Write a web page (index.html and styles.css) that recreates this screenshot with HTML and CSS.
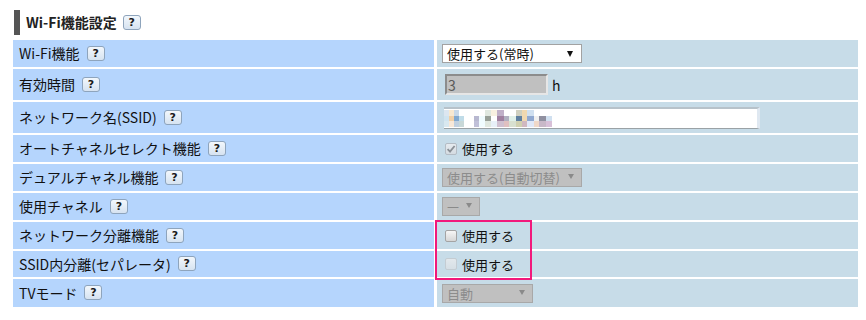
FILE: index.html
```html
<!DOCTYPE html>
<html lang="ja">
<head>
<meta charset="utf-8">
<title>Wi-Fi機能設定</title>
<link rel="stylesheet" href="styles.css">
</head>
<body>
<div class="page">
  <div class="heading">
    <span class="bar"></span>
    <span class="title">Wi-Fi機能設定</span>
    <span class="help">?</span>
  </div>
  <div class="table">
    <div class="label r27">Wi-Fi機能<span class="help">?</span></div>
    <div class="value r27"><div class="sel sel-main">使用する(常時)<i class="arrow"></i></div></div>

    <div class="label r31">有効時間<span class="help">?</span></div>
    <div class="value r31"><div class="num">3</div><span class="unit">h</span></div>

    <div class="label r31">ネットワーク名(SSID)<span class="help">?</span></div>
    <div class="value r31">
      <div class="ssid">
        <div class="mosaic">
          <span class="m m1"></span><span class="m m2"></span><span class="m m3"></span><span class="m m4"></span><span class="m m5"></span><span class="m m6"></span><span class="m m7"></span><span class="m m8"></span><span class="m m9"></span><span class="m m10"></span><span class="m m11"></span><span class="m m12"></span><span class="m m13"></span><span class="m m14"></span><span class="m m15"></span><span class="m m16"></span><span class="m m17"></span><span class="m m18"></span>
        </div>
      </div>
    </div>

    <div class="label r27">オートチャネルセレクト機能<span class="help">?</span></div>
    <div class="value r27"><span class="cb cb-checked"><svg viewBox="0 0 12 12" width="12" height="12"><path d="M2.6 6.2 L5 8.6 L9.6 3" fill="none" stroke="#8a9096" stroke-width="1.8"/></svg></span><span class="cbtext">使用する</span></div>

    <div class="label r27">デュアルチャネル機能<span class="help">?</span></div>
    <div class="value r27"><div class="sel sel-dis sel-dual">使用する(自動切替)<i class="arrow arrow-dis"></i></div></div>

    <div class="label r27">使用チャネル<span class="help">?</span></div>
    <div class="value r27"><div class="sel sel-dis sel-ch"><span class="dash">—</span><i class="arrow arrow-dis"></i></div></div>

    <div class="label r27">ネットワーク分離機能<span class="help">?</span></div>
    <div class="value r27"><span class="cb"></span><span class="cbtext">使用する</span></div>

    <div class="label r26">SSID内分離(セパレータ)<span class="help">?</span></div>
    <div class="value r26"><span class="cb cb-dis"></span><span class="cbtext">使用する</span></div>

    <div class="label r28">TVモード<span class="help">?</span></div>
    <div class="value r28"><div class="sel sel-dis sel-tv">自動<i class="arrow arrow-dis"></i></div></div>

    <div class="highlight"></div>
  </div>
</div>
</body>
</html>
```

FILE: styles.css
```css
* { box-sizing: border-box; }
html, body { margin: 0; padding: 0; background: #fff; }
body {
  font-family: "Noto Sans CJK JP", "Noto Sans", sans-serif;
  font-size: 14px;
  color: #111;
}
.page { padding: 10px 8px 0 13px; }

.heading {
  display: flex;
  align-items: center;
  height: 25px;
  margin-left: 1px;
}
.heading .bar {
  width: 6px;
  height: 25px;
  background: #555;
  margin-right: 6px;
}
.heading .title {
  font-weight: bold;
  font-size: 14px;
  line-height: 25px;
  color: #222;
}
.heading .help { margin-left: 6px; height: 15px; }

.help {
  display: inline-flex;
  align-items: center;
  justify-content: center;
  width: 18px;
  height: 15px;
  margin-left: 7px;
  border: 1px solid #8ea4bc;
  border-radius: 3px;
  background: linear-gradient(#f2f7fc, #d6e3f1);
  font-family: "DejaVu Sans", sans-serif;
  font-size: 11px;
  font-weight: bold;
  color: #1a1a1a;
  line-height: 1;
}

.table {
  position: relative;
  margin-top: 5px;
  display: grid;
  grid-template-columns: 1fr 1fr;
  column-gap: 3px;
  row-gap: 2px;
}
.label {
  background: #b5d5fd;
  display: flex;
  align-items: center;
  padding-left: 6px;
  padding-bottom: 1px;
  line-height: 1;
  white-space: nowrap;
  font-size: 14px;
}
.value {
  background: #c7dce8;
  display: flex;
  align-items: center;
  padding-left: 5px;
  line-height: 1;
  font-size: 13px;
}
.r26 { height: 26px; }
.r27 { height: 27px; }
.r28 { height: 28px; }
.r31 { height: 31px; }

.sel {
  position: relative;
  display: flex;
  align-items: center;
  height: 19px;
  padding-left: 4px;
  border: 1px solid #a2a2a2;
  background: #fff;
  font-size: 13px;
  color: #111;
  white-space: nowrap;
}
.sel-main { width: 140px; }
.sel-dis {
  background: #c0c0c0;
  border-color: #a8a8a8;
  color: #8c8c8c;
}
.sel-dual { width: 140px; }
.sel-ch { width: 38px; padding-left: 4px; }
.dash { font-family: "DejaVu Sans", sans-serif; font-size: 12px; color: #8a8a8a; }
.sel-tv { width: 91px; }
.arrow {
  position: absolute;
  right: 8px;
  top: 6px;
  width: 0;
  height: 0;
  border-left: 3.5px solid transparent;
  border-right: 3.5px solid transparent;
  border-top: 6px solid #111;
}
.arrow-dis { border-top-color: #8a8a8a; right: 7px; top: 5px; border-top-width: 5px; }

.num {
  margin-left: 3px;
  width: 103px;
  height: 21px;
  background: #c0c0c0;
  border-top: 2px solid #8c8c8c;
  border-left: 2px solid #8c8c8c;
  border-right: 2px solid #e6e6e6;
  border-bottom: 2px solid #e6e6e6;
  color: #5a5a5a;
  padding-left: 1px;
  display: flex;
  align-items: center;
  font-size: 14px;
}
.unit { margin-left: 4px; color: #111; font-size: 14px; }

.ssid {
  margin-left: 2px;
  width: 316px;
  height: 22px;
  background: #fff;
  border-top: 2px solid #b7c2ca;
  border-left: 0;
  border-right: 3px solid #dfe8f1;
  border-bottom: 1px solid #9aa2a6;
  display: flex;
  align-items: center;
}
.mosaic { display: flex; height: 17px; margin-top: 1px; }
.m { display: block; height: 17px; }
.m1 { width: 5px; background: linear-gradient(#dce6f0 0 33%, #d0e4f0 33% 66%, #d8e8f0 66%); }
.m2 { width: 5px; background: linear-gradient(#f8e8d0 0 33%, #f0d0a8 33% 66%, #f8e8d8 66%); }
.m3 { width: 5px; background: linear-gradient(#c8d8e8 0 33%, #80a8d0 33% 66%, #c0d0e0 66%); }
.m4 { width: 5px; background: linear-gradient(#ffffff 0 33%, #c0dce8 33% 66%, #c8d8d8 66%); }
.m5 { width: 10px; background: #fff; }
.m6 { width: 5px; background: linear-gradient(#ffffff 0 33%, #b8b8d0 33% 66%, #c0c0d8 66%); }
.m7 { width: 6px; background: linear-gradient(#ffffff 0 33%, #f0fcff 33% 66%, #f0fcff 66%); }
.m8 { width: 6px; background: linear-gradient(#e0e8e0 0 33%, #98a098 33% 66%, #e0e8e0 66%); }
.m9 { width: 6px; background: linear-gradient(#f8f0e0 0 33%, #ffffff 33% 66%, #e8f0f8 66%); }
.m10 { width: 7px; background: linear-gradient(#c0b0c8 0 33%, #a080a0 33% 66%, #d0c0d0 66%); }
.m11 { width: 5px; background: linear-gradient(#ffffff 0 33%, #b0b0c0 33% 66%, #e0c0c0 66%); }
.m12 { width: 7px; background: linear-gradient(#ffffff 0 33%, #e0f0e8 33% 66%, #d8e0d0 66%); }
.m13 { width: 6px; background: linear-gradient(#d0d0c0 0 33%, #6080a0 33% 66%, #d0d0b0 66%); }
.m14 { width: 5px; background: linear-gradient(#f0d8b0 0 33%, #f0d8b0 33% 66%, #d0b8c0 66%); }
.m15 { width: 7px; background: linear-gradient(#d0e0f0 0 33%, #90a8d0 33% 66%, #e0e8f8 66%); }
.m16 { width: 5px; background: linear-gradient(#ffffff 0 33%, #f0f0f0 33% 66%, #f0d8c8 66%); }
.m17 { width: 7px; background: linear-gradient(#ffffff 0 33%, #9090a0 33% 66%, #c8b8c8 66%); }
.m18 { width: 6px; background: linear-gradient(#ffffff 0 33%, #d0e0f0 33% 66%, #d8c0d8 66%); }

.cb {
  display: inline-block;
  width: 12px;
  height: 12px;
  margin-left: 3px;
  border: 1px solid #a4a4a4;
  border-radius: 2px;
  background: linear-gradient(#f6f6f6, #d6d6d6);
}
.cb svg { display: block; margin: -1px 0 0 -1px; }
.cb-checked { border-color: #b4bcc4; background: linear-gradient(#e6ebef, #d4dbe1); }
.cb-dis { border-color: #c4ccd2; background: linear-gradient(#e2e8ec, #d6dfe5); }
.cbtext { margin-left: 5px; color: #111; font-size: 13px; }

.highlight {
  position: absolute;
  left: 422px;
  top: 180px;
  width: 97px;
  height: 60px;
  border: 2px solid #f2197b;
  pointer-events: none;
}
```
